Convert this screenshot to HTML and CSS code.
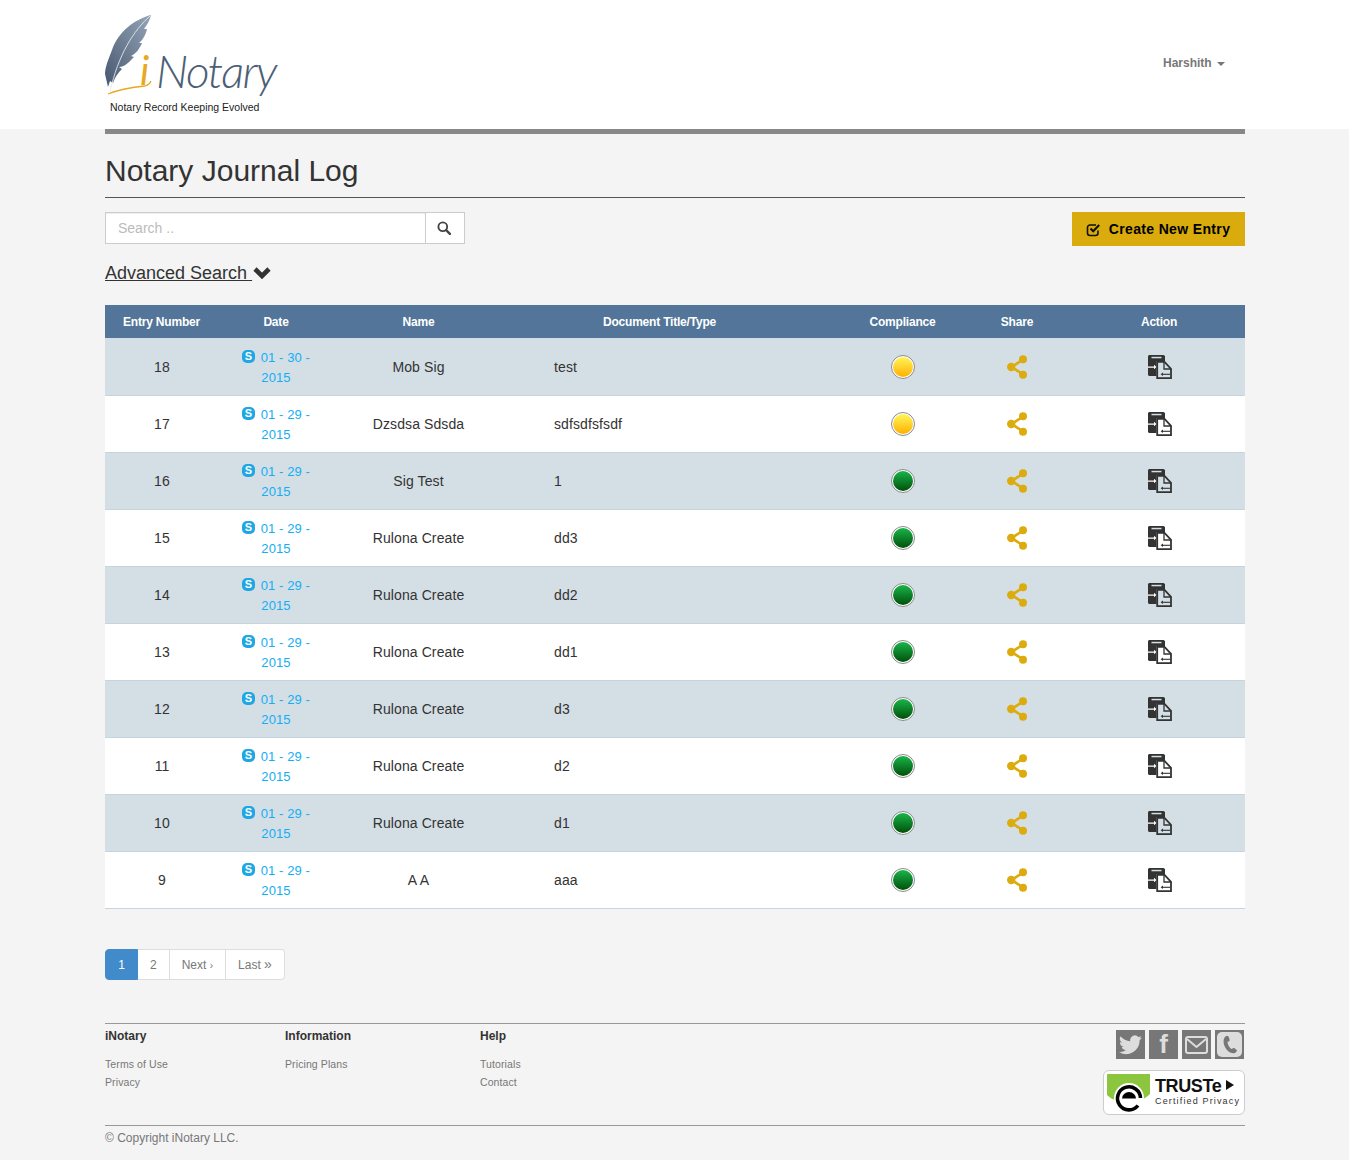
FILE: index.html
```html
<!DOCTYPE html>
<html lang="en">

<head>
    <meta charset="UTF-8">
    <title>Notary Journal Log</title>
    <link rel="stylesheet" href="styles.css">
</head>

<body>
    <svg class="sprites" width="0" height="0">
        <defs>
            <linearGradient id="featherFill" x1="0" y1="1" x2="1" y2="0">
                <stop offset="0" stop-color="#46586f" />
                <stop offset="1" stop-color="#96a5b8" />
            </linearGradient>
            <linearGradient id="yellowFill" x1="0" y1="0" x2="0" y2="1">
                <stop offset="0" stop-color="#fff65a" />
                <stop offset="1" stop-color="#ffb000" />
            </linearGradient>
            <linearGradient id="greenFill" x1="0" y1="0" x2="0" y2="1">
                <stop offset="0" stop-color="#1ab54a" />
                <stop offset="1" stop-color="#00500a" />
            </linearGradient>
        </defs>
        <symbol id="shareIcon" viewBox="0 0 20 24">
            <path d="M15.5 5 4.5 12l11 7" fill="none" stroke="#dcab0e" stroke-width="2.6" />
            <circle cx="16" cy="4.2" r="4" fill="#dcab0e" />
            <circle cx="4.2" cy="12" r="4.2" fill="#dcab0e" />
            <circle cx="16" cy="19.8" r="4" fill="#dcab0e" />
        </symbol>
        <symbol id="actionIcon" viewBox="0 0 24 24">
            <path d="M0 1 1 0h14.500L17 1v5H8.500v15H1l-1-1z" fill="#333" />
            <path d="M3.500 1.800h10v1.500h-10z" fill="#d3dee5" />
            <path d="M0 11.400h6V9.800l2.500 2.200L6 14.200v-1.400H0z" fill="#fff" />
            <path d="M9.200 6.900h7.300l6.500 7V23.100H9.200z" fill="none" stroke="#333" stroke-width="1.800" />
            <path d="M16 7v7h7" fill="none" stroke="#333" stroke-width="1.300" />
            <path d="M22 19.300h-8" fill="none" stroke="#333" stroke-width="1.100" />
            <path d="m15 17.500-2.400 1.800 2.400 1.800z" fill="#333" />
        </symbol>
        <symbol id="statusYellow" viewBox="0 0 24 24">
            <circle cx="12" cy="12" r="11.500" fill="#fff" stroke="#8a8a8a" />
            <circle cx="12" cy="12" r="10" fill="url(#yellowFill)" />
        </symbol>
        <symbol id="statusGreen" viewBox="0 0 24 24">
            <circle cx="12" cy="12" r="11.500" fill="#fff" stroke="#8a8a8a" />
            <circle cx="12" cy="12" r="10" fill="url(#greenFill)" />
        </symbol>
    </svg>

    <header class="siteHeader">
        <div class="container headerInner">
            <svg class="logo" width="190" height="115" viewBox="0 0 190 115">
                <path d="M47 15C31 19 14 32 8 50 4 60 1 68 1 74l3 13 2-6 3 2c2-6 5-10 9-14l-3-2c6 0 11-6 15-10l-3-1c5-2 9-8 11-13l-3 0c4-3 7-9 8-14l-3 0c3-4 6-9 7-14z" fill="url(#featherFill)" />
                <path d="M46 16C30 30 14 55 6 92" fill="none" stroke="#e4e8ee" stroke-width="0.900" />
                <path d="M4 94C14 90 30 87 41 86c3-1 5-2 6-5" fill="none" stroke="#e8a91d" stroke-width="1.300" />
                <text class="logoI" x="36" y="85">i</text>
                <text class="logoWord" x="52" y="88">Notary</text>
                <text class="logoTag" x="6" y="111">Notary Record Keeping Evolved</text>
            </svg>
            <a class="userMenu">Harshith <span class="caret"></span></a>
        </div>
    </header>

    <main class="container">
        <div class="titleBar"></div>
        <h1>Notary Journal Log</h1>

        <div class="toolBar">
            <div class="searchBox">
                <input class="searchInput" type="text" placeholder="Search ..">
                <button class="searchBtn" aria-label="Search">
                    <svg width="14" height="14" viewBox="0 0 15 15">
                        <circle cx="6.200" cy="6.200" r="4.700" fill="none" stroke="#444" stroke-width="2" />
                        <path d="m9.800 9.800 4 4" stroke="#444" stroke-width="2.400" stroke-linecap="round" />
                    </svg>
                </button>
            </div>
            <a class="createBtn">
                <svg width="15" height="15" viewBox="0 0 15 15">
                    <path d="M12 8.500V11a2.500 2.500 0 0 1-2.500 2.500H4A2.500 2.500 0 0 1 1.500 11V5.500A2.500 2.500 0 0 1 4 3h6" fill="none" stroke="#111" stroke-width="1.600" />
                    <path d="m4.500 6.500 2.700 2.700 6-6.200" fill="none" stroke="#111" stroke-width="2.200" />
                </svg>
                Create New Entry
            </a>
        </div>

        <div class="advanced">
            <a class="advancedLink">Advanced Search&nbsp;</a>
            <svg class="advancedArrow" width="18" height="13" viewBox="0 0 18 13">
                <path d="M2 3 9 10l7-7" fill="none" stroke="#333" stroke-width="4.600" />
            </svg>
        </div>

        <table class="journal">
            <colgroup>
                <col class="colEntry">
                <col class="colDate">
                <col class="colName">
                <col class="colTitle">
                <col class="colStatus">
                <col class="colShare">
                <col class="colAction">
            </colgroup>
            <thead>
                <tr>
                    <th>Entry Number</th>
                    <th>Date</th>
                    <th>Name</th>
                    <th class="titleHead">Document Title/Type</th>
                    <th>Compliance</th>
                    <th>Share</th>
                    <th>Action</th>
                </tr>
            </thead>
            <tbody>
                <tr>
                    <td class="entryCell">18</td>
                    <td class="dateCell"><span class="skype">S</span> 01 - 30 - 2015</td>
                    <td>Mob Sig</td>
                    <td class="titleCell">test</td>
                    <td><svg class="status"><use href="#statusYellow" /></svg></td>
                    <td><svg class="share"><use href="#shareIcon" /></svg></td>
                    <td><svg class="action"><use href="#actionIcon" /></svg></td>
                </tr>
                <tr>
                    <td class="entryCell">17</td>
                    <td class="dateCell"><span class="skype">S</span> 01 - 29 - 2015</td>
                    <td>Dzsdsa Sdsda</td>
                    <td class="titleCell">sdfsdfsfsdf</td>
                    <td><svg class="status"><use href="#statusYellow" /></svg></td>
                    <td><svg class="share"><use href="#shareIcon" /></svg></td>
                    <td><svg class="action"><use href="#actionIcon" /></svg></td>
                </tr>
                <tr>
                    <td class="entryCell">16</td>
                    <td class="dateCell"><span class="skype">S</span> 01 - 29 - 2015</td>
                    <td>Sig Test</td>
                    <td class="titleCell">1</td>
                    <td><svg class="status"><use href="#statusGreen" /></svg></td>
                    <td><svg class="share"><use href="#shareIcon" /></svg></td>
                    <td><svg class="action"><use href="#actionIcon" /></svg></td>
                </tr>
                <tr>
                    <td class="entryCell">15</td>
                    <td class="dateCell"><span class="skype">S</span> 01 - 29 - 2015</td>
                    <td>Rulona Create</td>
                    <td class="titleCell">dd3</td>
                    <td><svg class="status"><use href="#statusGreen" /></svg></td>
                    <td><svg class="share"><use href="#shareIcon" /></svg></td>
                    <td><svg class="action"><use href="#actionIcon" /></svg></td>
                </tr>
                <tr>
                    <td class="entryCell">14</td>
                    <td class="dateCell"><span class="skype">S</span> 01 - 29 - 2015</td>
                    <td>Rulona Create</td>
                    <td class="titleCell">dd2</td>
                    <td><svg class="status"><use href="#statusGreen" /></svg></td>
                    <td><svg class="share"><use href="#shareIcon" /></svg></td>
                    <td><svg class="action"><use href="#actionIcon" /></svg></td>
                </tr>
                <tr>
                    <td class="entryCell">13</td>
                    <td class="dateCell"><span class="skype">S</span> 01 - 29 - 2015</td>
                    <td>Rulona Create</td>
                    <td class="titleCell">dd1</td>
                    <td><svg class="status"><use href="#statusGreen" /></svg></td>
                    <td><svg class="share"><use href="#shareIcon" /></svg></td>
                    <td><svg class="action"><use href="#actionIcon" /></svg></td>
                </tr>
                <tr>
                    <td class="entryCell">12</td>
                    <td class="dateCell"><span class="skype">S</span> 01 - 29 - 2015</td>
                    <td>Rulona Create</td>
                    <td class="titleCell">d3</td>
                    <td><svg class="status"><use href="#statusGreen" /></svg></td>
                    <td><svg class="share"><use href="#shareIcon" /></svg></td>
                    <td><svg class="action"><use href="#actionIcon" /></svg></td>
                </tr>
                <tr>
                    <td class="entryCell">11</td>
                    <td class="dateCell"><span class="skype">S</span> 01 - 29 - 2015</td>
                    <td>Rulona Create</td>
                    <td class="titleCell">d2</td>
                    <td><svg class="status"><use href="#statusGreen" /></svg></td>
                    <td><svg class="share"><use href="#shareIcon" /></svg></td>
                    <td><svg class="action"><use href="#actionIcon" /></svg></td>
                </tr>
                <tr>
                    <td class="entryCell">10</td>
                    <td class="dateCell"><span class="skype">S</span> 01 - 29 - 2015</td>
                    <td>Rulona Create</td>
                    <td class="titleCell">d1</td>
                    <td><svg class="status"><use href="#statusGreen" /></svg></td>
                    <td><svg class="share"><use href="#shareIcon" /></svg></td>
                    <td><svg class="action"><use href="#actionIcon" /></svg></td>
                </tr>
                <tr>
                    <td class="entryCell">9</td>
                    <td class="dateCell"><span class="skype">S</span> 01 - 29 - 2015</td>
                    <td>A A</td>
                    <td class="titleCell">aaa</td>
                    <td><svg class="status"><use href="#statusGreen" /></svg></td>
                    <td><svg class="share"><use href="#shareIcon" /></svg></td>
                    <td><svg class="action"><use href="#actionIcon" /></svg></td>
                </tr>
            </tbody>
        </table>

        <nav class="pagination">
            <a class="pageLink pageActive">1</a>
            <a class="pageLink">2</a>
            <a class="pageLink">Next <small>›</small></a>
            <a class="pageLink">Last <small>»</small></a>
        </nav>
    </main>

    <footer class="container siteFooter">
        <div class="footerTop">
            <div class="footerCol colOne">
                <h4>iNotary</h4>
                <a>Terms of Use</a>
                <a>Privacy</a>
            </div>
            <div class="footerCol colTwo">
                <h4>Information</h4>
                <a>Pricing Plans</a>
            </div>
            <div class="footerCol">
                <h4>Help</h4>
                <a>Tutorials</a>
                <a>Contact</a>
            </div>
            <div class="footerRight">
                <div class="social">
                    <a class="socialIcon">
                        <svg width="23" height="20" viewBox="0 0 24 20">
                            <path d="M24 2.400a9.800 9.800 0 0 1-2.800.8A5 5 0 0 0 23.300.5a9.800 9.800 0 0 1-3.100 1.200 4.900 4.900 0 0 0-8.400 4.500A14 14 0 0 1 1.700.9a4.900 4.900 0 0 0 1.500 6.600 4.900 4.900 0 0 1-2.200-.6 4.900 4.900 0 0 0 3.900 4.900 4.900 4.900 0 0 1-2.200.1 4.900 4.900 0 0 0 4.600 3.400A9.900 9.900 0 0 1 0 17.300 14 14 0 0 0 21.500 5a10 10 0 0 0 2.500-2.600z" fill="#ddd" />
                        </svg>
                    </a>
                    <a class="socialIcon socialF">f</a>
                    <a class="socialIcon">
                        <svg width="23" height="18" viewBox="0 0 23 18">
                            <rect x="1" y="1" width="21" height="16" rx="2" fill="none" stroke="#ddd" stroke-width="2" />
                            <path d="m2 3 9.500 8L21 3" fill="none" stroke="#ddd" stroke-width="2" />
                        </svg>
                    </a>
                    <a class="socialIcon">
                        <svg width="25" height="25" viewBox="0 0 25 25">
                            <rect width="25" height="25" rx="5" fill="#ddd" />
                            <path d="M9 4C6 6 6 11 8 15c2 4 6 7 10 6l2-2c0-1-2-3-3.500-3l-2 1c-2-1-4-5-4-7l2-1c.5-1-.5-4-1.500-5z" fill="#777" />
                        </svg>
                    </a>
                </div>
                <div class="truste">
                    <svg class="trusteMark" width="46" height="43" viewBox="0 0 46 43">
                        <path d="M3 3h43v20c-3 3-6 5-10 6H14C9 29 6 27 3 24z" fill="#8cc63f" />
                        <circle cx="25" cy="27" r="15" fill="#fff" />
                        <path d="M34 34.500a11.500 11.500 0 1 1 2.500-7.500" fill="none" stroke="#000" stroke-width="3.600" />
                        <path d="M18 27.500a7 6.500 0 0 1 14 0z" fill="#000" />
                    </svg>
                    <div class="trusteText">
                        <strong>TRUSTe <i class="trusteArrow"></i></strong>
                        <span>Certified Privacy</span>
                    </div>
                </div>
            </div>
        </div>
        <p class="copyright">© Copyright iNotary LLC.</p>
    </footer>
</body>

</html>
```

FILE: styles.css
```css
body {
    margin: 0;
    font-family: "Liberation Sans", Arial, sans-serif;
    font-size: 14px;
    color: #333;
    background-color: #f4f4f4;
}

a {
    text-decoration: none;
}

.sprites {
    display: block;
    height: 0;
}

.container {
    width: 1140px;
    margin-left: 105px;
}

.siteHeader {
    height: 129px;
    background-color: #fff;
}

.headerInner {
    display: flex;
    justify-content: space-between;
}

.logo {
    display: block;
    margin-left: -1px;
}

.logoWord {
    font-family: "Lato", sans-serif;
    font-weight: 300;
    font-style: italic;
    font-size: 46px;
    letter-spacing: -1.6px;
    fill: #4d5f77;
}

.logoI {
    font-family: "Lato", sans-serif;
    font-weight: 400;
    font-style: italic;
    font-size: 40px;
    fill: #e8a91d;
}

.logoTag {
    font-family: "Liberation Sans", sans-serif;
    font-size: 10.5px;
    fill: #222;
}

.userMenu {
    margin-top: 56px;
    margin-right: 20px;
    height: 14px;
    line-height: 14px;
    font-size: 12px;
    font-weight: bold;
    color: #777;
}

.caret {
    display: inline-block;
    margin-left: 2px;
    vertical-align: middle;
    border-top: 4px solid #777;
    border-left: 4px solid transparent;
    border-right: 4px solid transparent;
}

.titleBar {
    height: 5px;
    background-color: #888;
}

h1 {
    margin: 0;
    padding: 19px 0 8px;
    font-size: 30px;
    line-height: 36px;
    font-weight: normal;
    color: #333;
    border-bottom: 1px solid #555;
}

.toolBar {
    display: flex;
    justify-content: space-between;
    align-items: flex-start;
    margin-top: 14px;
}

.searchBox {
    display: flex;
    width: 360px;
    height: 32px;
    box-sizing: border-box;
    background-color: #fff;
    border: 1px solid #ccc;
}

.searchInput {
    flex: 1;
    min-width: 0;
    padding: 0 12px;
    border: none;
    outline: none;
    font-family: inherit;
    font-size: 14px;
    box-shadow: inset 0 1px 1px rgba(0, 0, 0, 0.075);
}

.searchInput::placeholder {
    color: #bbb;
}

.searchBtn {
    width: 39px;
    padding: 2px 2px 0 0;
    border: none;
    border-left: 1px solid #ccc;
    background-color: #fff;
}

.createBtn {
    display: flex;
    align-items: center;
    justify-content: center;
    gap: 8px;
    width: 173px;
    height: 34px;
    box-sizing: border-box;
    padding-right: 1px;
    background-color: #d9ab0c;
    color: #000;
    font-size: 14px;
    font-weight: bold;
    letter-spacing: 0.35px;
}

.advanced {
    display: flex;
    align-items: center;
    gap: 1px;
    margin-top: 16px;
    height: 22px;
}

.advancedLink {
    font-size: 18px;
    line-height: 20px;
    color: #333;
    text-decoration: underline;
}

.advancedArrow {
    margin-top: -2px;
}

.journal {
    width: 1140px;
    margin-top: 21px;
    table-layout: fixed;
    border-collapse: collapse;
}

.colEntry { width: 113px; }
.colDate { width: 116px; }
.colName { width: 169px; }
.colTitle { width: 341px; }
.colStatus { width: 117px; }
.colShare { width: 112px; }
.colAction { width: 172px; }

.journal th {
    height: 33px;
    padding: 0;
    background-color: #527599;
    color: #fff;
    font-size: 12px;
    font-weight: bold;
    letter-spacing: -0.2px;
    text-align: center;
}

.journal th.titleHead {
    padding-right: 28px;
}

.journal td {
    height: 56px;
    padding: 0;
    text-align: center;
    vertical-align: middle;
    border-bottom: 1px solid #c6d4df;
    background-color: #fff;
    line-height: 20px;
    letter-spacing: 0.1px;
}

.journal tbody tr:first-child td {
    height: 57px;
}

.journal tbody tr:nth-child(odd) td {
    background-color: #d3dee5;
}

.journal td.entryCell {
    padding-left: 1px;
}

.journal td.titleCell {
    padding-left: 51px;
    text-align: left;
}

.journal td.dateCell {
    height: 54px;
    padding: 2px 22px 0;
    font-size: 13px;
    color: #14aef5;
}

.journal tbody tr:first-child td.dateCell {
    height: 55px;
}

.skype {
    display: inline-block;
    width: 13px;
    height: 13px;
    margin-right: 2px;
    border-radius: 5px;
    background-color: #1ea7e4;
    color: #fff;
    font-size: 11px;
    font-weight: bold;
    line-height: 13px;
    text-align: center;
    vertical-align: 2px;
}

.status {
    display: block;
    width: 24px;
    height: 24px;
    margin: 0 auto;
}

.share {
    display: block;
    width: 20px;
    height: 24px;
    margin: 0 auto;
}

.action {
    display: block;
    width: 24px;
    height: 24px;
    margin-left: calc(50% - 11px);
}

.pagination {
    display: inline-flex;
    margin-top: 40px;
    vertical-align: top;
}

.pageLink {
    height: 29px;
    padding: 0 12px;
    line-height: 30px;
    font-size: 12px;
    color: #777;
    background-color: #fff;
    border: 1px solid #ddd;
    border-left: none;
}

.pageLink small {
    font-size: 10px;
    line-height: 12px;
}

.pageLink:first-child {
    border-left: 1px solid #428bca;
    border-radius: 4px 0 0 4px;
}

.pageLink:last-child {
    border-radius: 0 4px 4px 0;
}

.pageLink:last-child small {
    font-size: 14px;
}

.pageActive {
    width: 7px;
    text-align: center;
    color: #fff;
    background-color: #428bca;
    border-color: #428bca;
}

.siteFooter {
    margin-top: 43px;
}

.footerTop {
    display: flex;
    height: 101px;
    border-top: 1px solid #999;
}

.footerCol {
    padding-top: 5px;
}

.colOne {
    width: 180px;
}

.colTwo {
    width: 195px;
}

.footerCol h4 {
    margin: 0 0 12px;
    font-size: 12px;
    line-height: 14px;
    color: #333;
}

.footerCol a {
    display: block;
    height: 18px;
    font-size: 10.5px;
    line-height: 18px;
    letter-spacing: 0.1px;
    color: #777;
}

.footerRight {
    margin-left: auto;
    display: flex;
    flex-direction: column;
    align-items: flex-end;
    padding-top: 6px;
}

.social {
    display: flex;
    gap: 4px;
    margin-right: 1px;
}

.socialIcon {
    display: flex;
    align-items: center;
    justify-content: center;
    width: 29px;
    height: 29px;
    background-color: #777;
}

.socialF {
    font-size: 26px;
    font-weight: bold;
    color: #ddd;
}

.truste {
    display: flex;
    width: 140px;
    height: 43px;
    margin-top: 11px;
    background-color: #fff;
    border: 1px solid #ccc;
    border-radius: 6px;
}

.trusteMark {
    display: block;
    flex: none;
}

.trusteText {
    display: flex;
    flex-direction: column;
    margin-left: 5px;
    padding-top: 6px;
}

.trusteText strong {
    font-size: 18px;
    line-height: 19px;
    letter-spacing: -0.4px;
    color: #111;
}

.trusteArrow {
    display: inline-block;
    border-left: 8px solid #111;
    border-top: 5px solid transparent;
    border-bottom: 5px solid transparent;
    vertical-align: 2px;
}

.trusteText span {
    font-size: 9px;
    line-height: 10px;
    letter-spacing: 1.15px;
    white-space: nowrap;
    color: #333;
}

.copyright {
    margin: 0;
    padding-top: 5px;
    height: 29px;
    box-sizing: border-box;
    font-size: 12px;
    line-height: 14px;
    color: #777;
    border-top: 1px solid #999;
}
```
